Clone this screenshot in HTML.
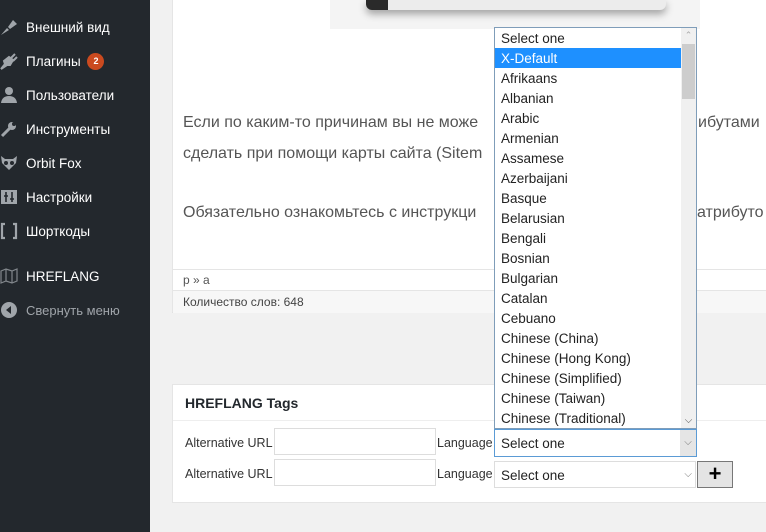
<!DOCTYPE html>
<html><head><meta charset="utf-8"><style>
*{margin:0;padding:0;box-sizing:border-box}
body{width:766px;height:532px;overflow:hidden;background:#f1f1f1;font-family:"Liberation Sans",sans-serif;position:relative}
.abs{position:absolute}
#side{left:0;top:0;width:150px;height:532px;background:#23282d}
.mi{position:absolute;left:26px;color:#fff;font-size:13.5px;line-height:18px;margin-top:1px}
.ic{position:absolute;left:0;width:18px;height:18px}
.t{color:#555;font-size:16px;position:absolute;white-space:nowrap}
.opt{height:20px;line-height:21px;padding-left:6px;font-size:13.5px;color:#222}
.lbl{position:absolute;font-size:12.5px;color:#333}
.inp{position:absolute;left:274px;width:162px;height:27px;border:1px solid #ddd;background:#fff}
</style></head><body>
<div id="side" class="abs">
 <svg class="ic" style="top:18px" viewBox="0 0 18 18"><path d="M1 17 L7 10 L9 12 Z M8 9 L13 2 L17 6 L10 11 Z" fill="#a0a5aa"/></svg>
 <div class="mi" style="top:18px">Внешний вид</div>
 <svg class="ic" style="top:52px" viewBox="0 0 18 18"><path d="M1 17 L5 12 L4 9 L9 5 L13 8 L10 13 L7 13 Z M11 6 L15 2 M13 9 L17 5" stroke="#a0a5aa" stroke-width="2" fill="#a0a5aa"/></svg>
 <div class="mi" style="top:52px">Плагины <span style="display:inline-block;width:17px;height:17px;border-radius:9px;background:#ca4a1f;font-size:9px;text-align:center;line-height:17px;font-weight:bold;margin-left:3px;vertical-align:top">2</span></div>
 <svg class="ic" style="top:86px" viewBox="0 0 18 18"><circle cx="9" cy="5" r="4" fill="#a0a5aa"/><path d="M1 17 Q2 10 9 10 Q16 10 17 17Z" fill="#a0a5aa"/></svg>
 <div class="mi" style="top:86px">Пользователи</div>
 <svg class="ic" style="top:120px" viewBox="0 0 18 18"><path d="M2 16 L10 8" stroke="#a0a5aa" stroke-width="3"/><circle cx="12" cy="6" r="4" fill="#a0a5aa"/><circle cx="14" cy="4" r="2" fill="#23282d"/></svg>
 <div class="mi" style="top:120px">Инструменты</div>
 <svg class="ic" style="top:154px" viewBox="0 0 18 18"><path d="M1 2 L5 5 L13 5 L17 2 L16 9 L9 16 L2 9Z" fill="#a0a5aa"/><circle cx="6" cy="9" r="2" fill="#23282d"/><circle cx="12" cy="9" r="2" fill="#23282d"/></svg>
 <div class="mi" style="top:154px">Orbit Fox</div>
 <svg class="ic" style="top:188px" viewBox="0 0 18 18"><rect x="1" y="2" width="16" height="14" fill="#a0a5aa"/><path d="M6 4V14M12 4V14M4 8H8M10 11H14" stroke="#23282d" stroke-width="1.6"/></svg>
 <div class="mi" style="top:188px">Настройки</div>
 <svg class="ic" style="top:222px" viewBox="0 0 18 18"><path d="M5 2H2V16H5M13 2H16V16H13" stroke="#a0a5aa" stroke-width="2.2" fill="none"/></svg>
 <div class="mi" style="top:222px">Шорткоды</div>
 <svg class="ic" style="top:267px" viewBox="0 0 18 18"><path d="M1 4 L6 2 L12 4 L17 2 V14 L12 16 L6 14 L1 16Z M6 2V14M12 4V16" stroke="#82878c" stroke-width="1.2" fill="none"/></svg>
 <div class="mi" style="top:267px">HREFLANG</div>
 <svg class="ic" style="top:301px" viewBox="0 0 18 18"><circle cx="9" cy="9" r="8" fill="#a0a5aa"/><path d="M11 5 L6 9 L11 13Z" fill="#23282d"/></svg>
 <div class="mi" style="top:301px;color:#a0a5aa;font-size:13px">Свернуть меню</div>
</div>

<div class="abs" style="left:172px;top:0;width:600px;height:313px;background:#fff;border-left:1px solid #e5e5e5;border-bottom:1px solid #ddd"></div>
<div class="abs" style="left:330px;top:0;width:370px;height:29px;background:#f4f4f4"></div>
<div class="abs" style="left:366px;top:0;width:300px;height:10px;background:#ececec;border-radius:0 0 6px 6px;box-shadow:0 4px 8px rgba(0,0,0,.35)"><div style="position:absolute;left:0;top:0;width:22px;height:10px;background:#2a2a2a;border-radius:0 0 0 6px"></div></div>
<div class="t" style="left:183px;top:114px">Если по каким-то причинам вы не може</div>
<div class="t" style="left:698px;top:114px">ибутами</div>
<div class="t" style="left:183px;top:145px">сделать при помощи карты сайта (Sitem</div>
<div class="t" style="left:183px;top:204px">Обязательно ознакомьтесь с инструкци</div>
<div class="t" style="left:697px;top:204px">атрибуто</div>
<div class="abs" style="left:173px;top:269px;width:600px;height:1px;background:#e5e5e5"></div>
<div class="abs" style="left:183px;top:273px;font-size:12px;color:#555">p » a</div>
<div class="abs" style="left:173px;top:290px;width:600px;height:23px;background:#f7f7f7;border-top:1px solid #e5e5e5"></div>
<div class="abs" style="left:183px;top:295px;font-size:12px;color:#444">Количество слов: 648</div>

<div class="abs" style="left:172px;top:384px;width:600px;height:119px;background:#fff;border:1px solid #e5e5e5"></div>
<div class="abs" style="left:185px;top:395px;font-size:14px;font-weight:bold;color:#23282d">HREFLANG Tags</div>
<div class="abs" style="left:173px;top:420px;width:600px;height:1px;background:#eee"></div>
<div class="lbl" style="left:185px;top:436px">Alternative URL</div>
<div class="inp" style="top:428px"></div>
<div class="lbl" style="left:437px;top:436px">Language</div>
<div class="lbl" style="left:185px;top:467px">Alternative URL</div>
<div class="inp" style="top:459px"></div>
<div class="lbl" style="left:437px;top:467px">Language</div>
<div class="abs" style="left:494px;top:429px;width:203px;height:28px;border:1px solid #5b9bd5;background:#fff"><div class="opt" style="line-height:28px">Select one</div><div style="position:absolute;right:0;top:0;width:16px;height:26px;background:#e5e5e5;color:#777;font-size:10px;text-align:center;line-height:26px">⌵</div></div>
<div class="abs" style="left:494px;top:461px;width:202px;height:27px;border:1px solid #ddd;background:#fff"><div class="opt" style="line-height:27px">Select one</div><div style="position:absolute;right:3px;top:0;color:#777;font-size:10px;line-height:26px">⌵</div></div>
<div class="abs" style="left:697px;top:461px;width:36px;height:27px;border:1px solid #777;background:#e4e4e4;text-align:center;font-size:22px;font-weight:bold;line-height:24px;color:#000">+</div>

<div class="abs" style="left:494px;top:27px;width:203px;height:402px;border:1px solid #7f9db9;background:#fff;overflow:hidden">
 <div class="opt">Select one</div>
 <div class="opt" style="background:#1e90ff;color:#fff;margin-right:15px">X-Default</div>
 <div class="opt">Afrikaans</div><div class="opt">Albanian</div><div class="opt">Arabic</div><div class="opt">Armenian</div><div class="opt">Assamese</div><div class="opt">Azerbaijani</div><div class="opt">Basque</div><div class="opt">Belarusian</div><div class="opt">Bengali</div><div class="opt">Bosnian</div><div class="opt">Bulgarian</div><div class="opt">Catalan</div><div class="opt">Cebuano</div><div class="opt">Chinese (China)</div><div class="opt">Chinese (Hong Kong)</div><div class="opt">Chinese (Simplified)</div><div class="opt">Chinese (Taiwan)</div><div class="opt">Chinese (Traditional)</div>
 <div style="position:absolute;right:0;top:0;width:15px;height:400px;background:#f0f0f0">
  <div style="position:absolute;top:0;width:15px;height:15px;color:#aaa;font-size:9px;text-align:center;line-height:15px">⌃</div>
  <div style="position:absolute;top:16px;left:1px;width:13px;height:55px;background:#cdcdcd"></div>
  <div style="position:absolute;bottom:0;width:15px;height:15px;color:#555;font-size:10px;text-align:center;line-height:15px">⌵</div>
 </div>
</div>
</body></html>
